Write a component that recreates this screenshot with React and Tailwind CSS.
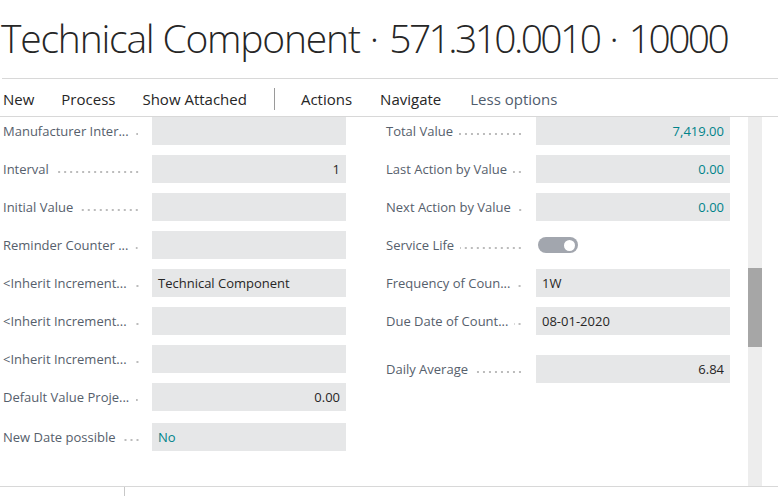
import React from "react";

const leftFields = [
  { label: "Manufacturer Inter...", value: "" },
  { label: "Interval", value: "1", align: "right" },
  { label: "Initial Value", value: "" },
  { label: "Reminder Counter ...", value: "" },
  { label: "<Inherit Increment...", value: "Technical Component" },
  { label: "<Inherit Increment...", value: "" },
  { label: "<Inherit Increment...", value: "" },
  { label: "Default Value Proje...", value: "0.00", align: "right" },
  { label: "New Date possible", value: "No", teal: true, extra: true },
];

const rightFields = [
  { label: "Total Value", value: "7,419.00", align: "right", teal: true },
  { label: "Last Action by Value", value: "0.00", align: "right", teal: true },
  { label: "Next Action by Value", value: "0.00", align: "right", teal: true },
  { label: "Service Life", toggle: true },
  { label: "Frequency of Coun...", value: "1W" },
  { label: "Due Date of Count...", value: "08-01-2020" },
  { label: "Daily Average", value: "6.84", align: "right", group: true },
];

const Dots = () => (
  <span className="ml-[6px] mt-[3px] h-[6px] min-w-0 flex-1 bg-[radial-gradient(circle,#bcbcbc_0.8px,transparent_1.3px)] bg-[length:6px_6px] bg-right bg-repeat-x" />
);

const FieldRow = ({ f, gapClass }) => (
  <div className={`flex h-[28px] items-center ${f.extra ? "mt-[2px]" : ""} ${f.group ? "mt-[10px]" : ""}`}>
    <div className="flex w-[137px] items-center pt-[2px]">
      <span className="whitespace-nowrap text-[13px] text-[#56606c]">{f.label}</span>
      <Dots />
    </div>
    {f.toggle ? (
      <div className={`${gapClass} flex h-[28px] w-[194px] items-center pl-[2px]`}>
        <div className="flex h-[16px] w-[40px] items-center justify-end rounded-full bg-[#a2a6ae] pr-[3px]">
          <div className="h-[11px] w-[11px] rounded-full bg-white" />
        </div>
      </div>
    ) : (
      <div
        className={`${gapClass} flex h-[28px] w-[194px] items-center bg-[#e6e7e8] px-[6px] pt-[2px] text-[13px] ${
          f.align === "right" ? "justify-end" : ""
        } ${f.teal ? "text-[#00838a]" : "text-[#262626]"}`}
      >
        {f.value}
      </div>
    )}
  </div>
);

export default function App() {
  return (
    <div className="relative h-[496px] w-[778px] overflow-hidden bg-white font-['Open_Sans',sans-serif] text-[#262626]">
      {/* title */}
      <div className="h-[78px] pl-[1px] pt-[14px]">
        <h1 className="whitespace-nowrap text-[39px] font-light leading-[48px] text-[#262626]">
          <span className="tracking-[-1.2px]">Technical Component</span>
          <span> · </span>
          <span className="tracking-[-2.6px]">571.310.0010</span>
          <span> · </span>
          <span className="tracking-[-2.6px]">10000</span>
        </h1>
      </div>
      <div className="ml-[2px] border-t border-[#d8d8d8]" />

      {/* action bar */}
      <div className="flex h-[37px] items-center pl-[3px] pt-[3px] text-[15px] text-[#262626]">
        <span>New</span>
        <span className="ml-[27px]">Process</span>
        <span className="ml-[27px]">Show Attached</span>
        <span className="ml-[27px] h-[22px] border-l border-[#9a9a9a]" />
        <span className="ml-[26px]">Actions</span>
        <span className="ml-[28px]">Navigate</span>
        <span className="ml-[29px] text-[#505c6d]">Less options</span>
      </div>
      <div className="border-t border-[#d8d8d8]" />

      {/* content */}
      <div className="flex h-[369px]">
        <div className="flex w-[346px] flex-col gap-[10px] pl-[3px]">
          {leftFields.map((f, i) => (
            <FieldRow key={i} f={f} gapClass="ml-[12px]" />
          ))}
        </div>
        <div className="ml-[40px] flex w-[344px] flex-col gap-[10px]">
          {rightFields.map((f, i) => (
            <FieldRow key={i} f={f} gapClass="ml-[13px]" />
          ))}
        </div>
        <div className="ml-[18px] flex w-[14px] flex-col bg-[#ededed]">
          <div className="mt-[151px] h-[79px] bg-[#a6a6a6]" />
        </div>
      </div>
      <div className="border-t border-[#d8d8d8]" />
      <div className="flex h-[10px]">
        <div className="ml-[124px] h-full border-l border-[#c8c8c8]" />
      </div>
    </div>
  );
}
